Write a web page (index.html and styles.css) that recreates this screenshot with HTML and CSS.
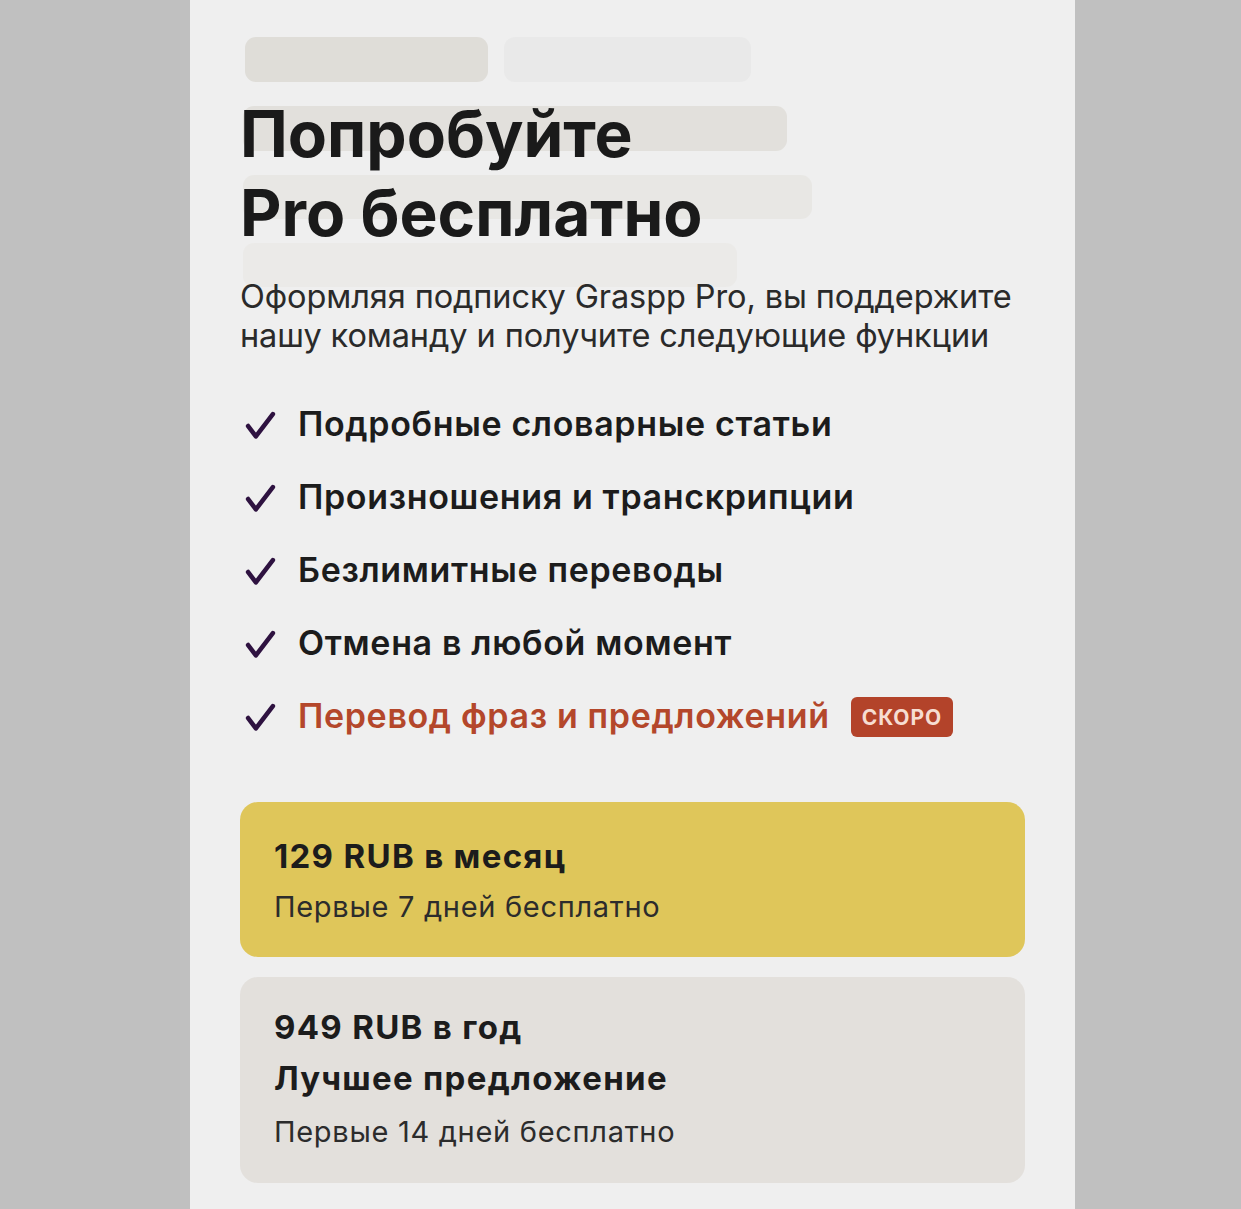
FILE: index.html
```html
<!DOCTYPE html>
<html lang="ru">
<head>
<meta charset="utf-8">
<title>Graspp Pro</title>
<link rel="stylesheet" href="styles.css">
</head>
<body>
<main class="panel">
  <div class="top-bars">
    <div class="sk sk-1"></div>
    <div class="sk sk-2"></div>
  </div>
  <section class="hero">
    <div class="hero-bars">
      <div class="sk sk-3"></div>
      <div class="sk sk-4"></div>
      <div class="sk sk-5"></div>
    </div>
    <div class="hero-text">
      <h1 class="title">Попробуйте<br>Pro бесплатно</h1>
      <p class="lead">Оформляя подписку Graspp Pro, вы поддержите<br>нашу команду и получите следующие функции</p>
    </div>
  </section>
  <ul class="features">
    <li class="feature"><svg class="check" viewBox="0 0 32 30"><path d="M4 15.5 L11.5 25.5 L28 4"/></svg><span>Подробные словарные статьи</span></li>
    <li class="feature"><svg class="check" viewBox="0 0 32 30"><path d="M4 15.5 L11.5 25.5 L28 4"/></svg><span>Произношения и транскрипции</span></li>
    <li class="feature"><svg class="check" viewBox="0 0 32 30"><path d="M4 15.5 L11.5 25.5 L28 4"/></svg><span>Безлимитные переводы</span></li>
    <li class="feature"><svg class="check" viewBox="0 0 32 30"><path d="M4 15.5 L11.5 25.5 L28 4"/></svg><span>Отмена в любой момент</span></li>
    <li class="feature feature-soon"><svg class="check" viewBox="0 0 32 30"><path d="M4 15.5 L11.5 25.5 L28 4"/></svg><span>Перевод фраз и предложений</span><span class="badge">СКОРО</span></li>
  </ul>
  <div class="plans">
    <div class="plan plan-month">
      <div class="plan-title">129 RUB в месяц</div>
      <div class="plan-sub">Первые 7 дней бесплатно</div>
    </div>
    <div class="plan plan-year">
      <div class="plan-title">949 RUB в год</div>
      <div class="plan-title">Лучшее предложение</div>
      <div class="plan-sub">Первые 14 дней бесплатно</div>
    </div>
  </div>
</main>
</body>
</html>
```

FILE: styles.css
```css
* { box-sizing: border-box; }

html, body {
  margin: 0;
  padding: 0;
  height: 100%;
}

body {
  background: #c0c0c0;
  font-family: Inter, "Noto Sans", "Liberation Sans", sans-serif;
  color: #1c1c1c;
  overflow: hidden;
}

.panel {
  margin-left: 190px;
  width: 885px;
  min-height: 100%;
  background: #efefef;
  padding: 37px 50px 0 50px;
}

.top-bars {
  display: flex;
  gap: 16px;
  margin-left: 5px;
}

.sk {
  border-radius: 11px;
}

.sk-1 { width: 243px; height: 45px; background: #dfddd8; }
.sk-2 { width: 247px; height: 45px; background: #e9e9e9; }
.sk-3 { width: 544px; height: 45px; background: #e2e0dc; }
.sk-4 { width: 569px; height: 44px; background: #e8e7e4; }
.sk-5 { width: 494px; height: 44px; background: #ebeae8; }

.hero {
  display: grid;
}

.hero > * {
  grid-area: 1 / 1;
}

.hero-bars {
  display: flex;
  flex-direction: column;
  gap: 24px;
  padding-top: 24px;
  margin-left: 3px;
}

.hero-text {
  position: relative;
}

.title {
  margin: 12px 0 0 0;
  font-size: 64px;
  line-height: 79px;
  font-weight: 700;
  letter-spacing: 0;
  color: #1a1a1a;
}

.lead {
  margin: 25px 0 0 0;
  font-size: 32.5px;
  line-height: 39px;
  font-weight: 400;
  color: #2a2a2a;
  letter-spacing: -0.1px;
}

.features {
  list-style: none;
  margin: 47px 0 0 0;
  padding: 0;
  display: flex;
  flex-direction: column;
  gap: 29px;
}

.feature {
  display: flex;
  align-items: center;
  height: 44px;
  font-size: 34px;
  line-height: 44px;
  font-weight: 600;
  color: #1c1c1c;
  letter-spacing: 0.65px;
}

.check {
  width: 33px;
  height: 31px;
  margin-left: 4px;
  margin-right: 21px;
  margin-top: 2px;
  flex: none;
}

.check path {
  fill: none;
  stroke: #2e1240;
  stroke-width: 4.4;
  stroke-linecap: round;
  stroke-linejoin: round;
}

.feature-soon {
  color: #b4472b;
}

.badge {
  margin-left: 21px;
  height: 40px;
  padding: 0 11px;
  display: inline-flex;
  align-items: center;
  background: #b3432a;
  color: #f6ddd2;
  border-radius: 6px;
  font-size: 21px;
  font-weight: 700;
  letter-spacing: 0.9px;
  line-height: 1;
  margin-top: 2px;
}

.plans {
  margin-top: 64px;
  display: flex;
  flex-direction: column;
  gap: 20px;
}

.plan {
  border-radius: 18px;
  padding: 34px 34px 30px 34px;
  display: flex;
  flex-direction: column;
  gap: 11px;
}

.plan-month { background: #dfc65a; }

.plan-year {
  background: #e3e0dc;
  padding-top: 30px;
  padding-bottom: 31px;
}

.plan-title {
  font-size: 33px;
  line-height: 40px;
  font-weight: 700;
  color: #1c1c1c;
  letter-spacing: 1.3px;
}

.plan-sub {
  font-size: 29px;
  line-height: 40px;
  font-weight: 400;
  color: #2c2c2c;
  letter-spacing: 0.7px;
}

.plan-year .plan-sub {
  margin-top: 3px;
}
```
